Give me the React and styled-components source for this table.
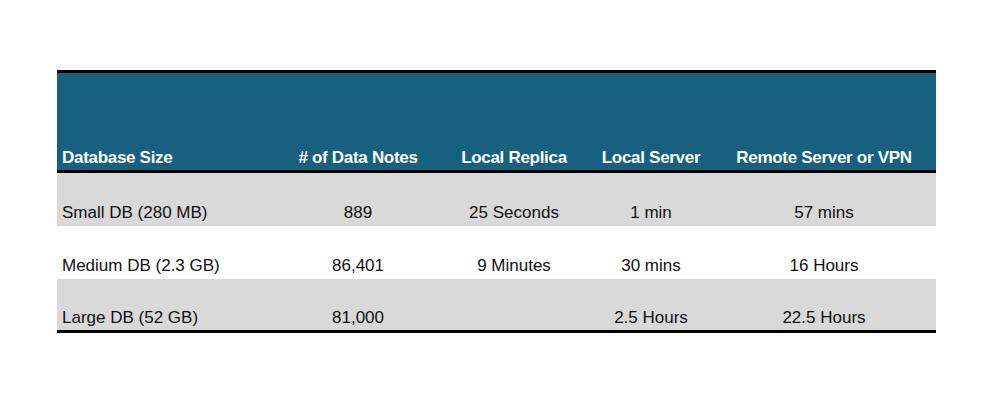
import React from "react";
import styled, { createGlobalStyle } from "styled-components";

const GlobalStyle = createGlobalStyle`
  body {
    margin: 0;
    background: #fff;
    font-family: "Liberation Sans", Arial, sans-serif;
  }
`;

const columns = [
  { label: "Database Size", align: "left" },
  { label: "# of Data Notes", align: "center" },
  { label: "Local Replica", align: "center" },
  { label: "Local Server", align: "center" },
  { label: "Remote Server or VPN", align: "center" },
];

const rows = [
  ["Small DB (280 MB)", "889", "25 Seconds", "1 min", "57 mins"],
  ["Medium DB (2.3 GB)", "86,401", "9 Minutes", "30 mins", "16 Hours"],
  ["Large DB (52 GB)", "81,000", "", "2.5 Hours", "22.5 Hours"],
];

const App = () => {
  return (
    <Page>
      <GlobalStyle />
      <Table>
        <HeaderRow>
          {columns.map((c) => (
            <HeadCell key={c.label} $align={c.align}>
              {c.label}
            </HeadCell>
          ))}
        </HeaderRow>
        {rows.map((r, i) => (
          <Row key={r[0]} $shaded={i % 2 === 0}>
            {r.map((v, j) => (
              <Cell key={j} $align={columns[j].align}>
                {v}
              </Cell>
            ))}
          </Row>
        ))}
      </Table>
    </Page>
  );
};
export default App;

const Page = styled.div`
  width: 1000px;
  height: 408px;
  padding: 70px 0 0 57px;
  box-sizing: border-box;
`;

const Table = styled.div`
  width: 879px;
  display: flex;
  flex-direction: column;
  border-bottom: 3px solid #000;
`;

const grid = `
  display: grid;
  grid-template-columns: 221px 160px 152px 122px 224px;
  align-items: end;
`;

const HeaderRow = styled.div`
  ${grid}
  height: 95px;
  background: #17607f;
  border-top: 3px solid #000;
  border-bottom: 3px solid #000;
  padding-bottom: 2px;
  box-sizing: content-box;
`;

const HeadCell = styled.div`
  color: #fff;
  font-weight: bold;
  font-size: 17px;
  line-height: 20px;
  letter-spacing: -0.3px;
  text-align: ${(p) => p.$align};
  padding-left: ${(p) => (p.$align === "left" ? "5px" : "0")};
  white-space: nowrap;
`;

const Row = styled.div`
  ${grid}
  height: 53px;
  box-sizing: border-box;
  padding-bottom: 3px;
  background: ${(p) => (p.$shaded ? "#d9d9d9" : "#fff")};

  &:last-child {
    height: 51px;
    padding-bottom: 2px;
  }
`;

const Cell = styled.div`
  color: #111;
  font-size: 17px;
  line-height: 20px;
  text-align: ${(p) => p.$align};
  padding-left: ${(p) => (p.$align === "left" ? "5px" : "0")};
  white-space: nowrap;
`;
